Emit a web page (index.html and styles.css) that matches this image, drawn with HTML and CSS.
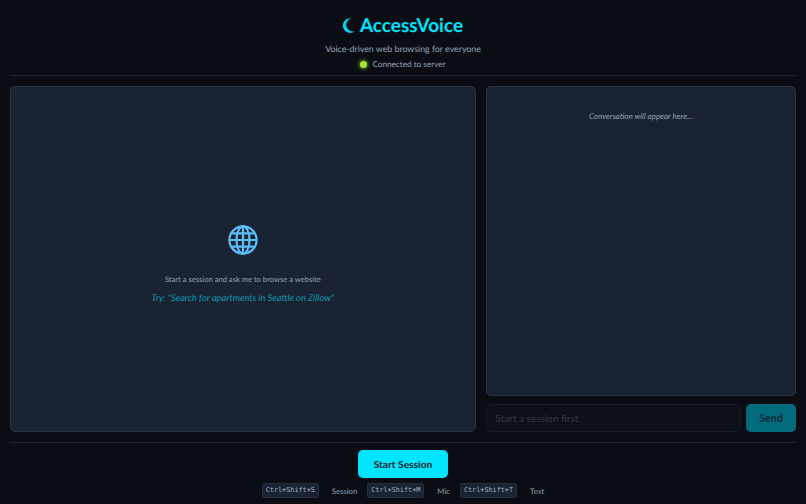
FILE: index.html
```html
<!DOCTYPE html>
<html lang="en">
<head>
    <meta charset="UTF-8">
    <meta name="viewport" content="width=device-width, initial-scale=1.0">
    <title>AccessVoice</title>
    <link rel="stylesheet" href="styles.css">
</head>
<body>
    <div class="app">
        <header class="header">
            <h1>
                <svg class="moon" width="12" height="15" viewBox="0 0 12 15">
                    <path d="M8.2 0.3A7.3 7.3 0 1 0 11.7 13.2A6 6 0 0 1 8.2 0.3Z"></path>
                </svg>
                <span>AccessVoice</span>
            </h1>
            <p class="tagline">Voice-driven web browsing for everyone</p>
            <div class="status">
                <span class="status-dot"></span>
                <span>Connected to server</span>
            </div>
        </header>

        <main class="main">
            <section class="browser-panel">
                <svg class="globe" width="30" height="30" viewBox="0 0 30 30">
                    <circle cx="15" cy="15" r="13.6" class="globe-line"></circle>
                    <ellipse cx="15" cy="15" rx="6.5" ry="13.6" class="globe-line"></ellipse>
                    <path d="M15 1.4V28.6M1.4 15H28.6M3.6 8.4H26.4M3.6 21.6H26.4" class="globe-line"></path>
                </svg>
                <p class="browser-hint">Start a session and ask me to browse a website</p>
                <p class="browser-try">Try: "Search for apartments in Seattle on Zillow"</p>
            </section>

            <section class="chat-panel">
                <div class="chat-log">
                    <p class="chat-empty">Conversation will appear here...</p>
                </div>
                <div class="chat-form">
                    <input type="text" class="chat-input" placeholder="Start a session first" disabled>
                    <button class="send-btn" disabled>Send</button>
                </div>
            </section>
        </main>

        <footer class="footer">
            <button class="start-btn">Start Session</button>
            <div class="shortcuts">
                <kbd>Ctrl+Shift+S</kbd><span>Session</span>
                <kbd>Ctrl+Shift+M</kbd><span>Mic</span>
                <kbd>Ctrl+Shift+T</kbd><span>Text</span>
            </div>
        </footer>
    </div>
</body>
</html>
```

FILE: styles.css
```css
* {
    box-sizing: border-box;
}

body {
    font-family: 'Lato', 'Open Sans', sans-serif;
    text-rendering: geometricPrecision;
    background-color: #0a0e14;
    color: #94a3b8;
    height: 100vh;
    margin: 0;
    overflow: hidden;
}

.app {
    display: flex;
    flex-direction: column;
    height: 100%;
    padding: 0 10px;
}

.header {
    height: 76px;
    padding-top: 13px;
    text-align: center;
    border-bottom: 1px solid #1a2332;
}

.header h1 {
    display: flex;
    justify-content: center;
    align-items: center;
    gap: 5px;
    margin: 0;
    font-size: 19px;
    line-height: 25px;
    font-weight: 700;
    color: #00e5ff;
}

.moon {
    fill: #00d4ee;
}

.tagline {
    margin: 4px 0 0;
    font-size: 8.8px;
    line-height: 14px;
}

.status {
    display: flex;
    justify-content: center;
    align-items: center;
    gap: 5px;
    margin-top: 1px;
    font-size: 8.2px;
    line-height: 14px;
}

.status-dot {
    width: 7px;
    height: 7px;
    border-radius: 50%;
    background-color: #a3e635;
    box-shadow: 0 0 4px #a3e635;
}

.main {
    display: grid;
    grid-template-columns: 3fr 2fr;
    gap: 10px;
    height: 346px;
    margin-top: 10px;
}

.browser-panel,
.chat-log {
    background-color: #1a2332;
    border: 1px solid #2a3544;
    border-radius: 5px;
}

.browser-panel {
    display: flex;
    flex-direction: column;
    align-items: center;
    justify-content: center;
    padding-top: 10px;
}

.globe-line {
    fill: none;
    stroke: #5cbcf5;
    stroke-width: 2.2;
}

.browser-hint {
    margin: 18px 0 0;
    font-size: 7.6px;
    line-height: 12px;
}

.browser-try {
    margin: 6px 0 0;
    font-size: 9.25px;
    line-height: 13px;
    font-style: italic;
    color: #0c9ab2;
}

.chat-panel {
    display: flex;
    flex-direction: column;
    gap: 8px;
    min-width: 0;
}

.chat-log {
    flex: 1;
    padding: 23px 10px;
}

.chat-empty {
    margin: 0;
    text-align: center;
    font-size: 8px;
    line-height: 12px;
    font-style: italic;
}

.chat-form {
    display: flex;
    gap: 5px;
    height: 28px;
}

.chat-input {
    flex: 1;
    min-width: 0;
    padding: 0 9px;
    font-family: inherit;
    font-size: 10px;
    background-color: #0d1117;
    border: 1px solid #141b26;
    border-radius: 5px;
}

.chat-input::placeholder {
    color: #2f3a48;
}

.send-btn {
    width: 50px;
    border: none;
    border-radius: 5px;
    font-family: inherit;
    font-size: 10.5px;
    font-weight: 700;
    background-color: #036c7c;
    color: #0a2a38;
}

.footer {
    display: flex;
    flex-direction: column;
    align-items: center;
    gap: 5px;
    margin-top: 10px;
    padding-top: 7px;
    border-top: 1px solid #1a2332;
}

.start-btn {
    width: 90px;
    height: 28px;
    border: none;
    border-radius: 5px;
    font-family: inherit;
    font-size: 10.2px;
    font-weight: 700;
    background-color: #00e5ff;
    color: #0a1a24;
}

.shortcuts {
    display: flex;
    align-items: center;
    gap: 10px;
    font-size: 7.7px;
}

.shortcuts span {
    margin-left: 3px;
}

kbd {
    padding: 2px 3px;
    font-family: 'DejaVu Sans Mono', monospace;
    font-size: 6.8px;
    line-height: 9px;
    color: #a3b1c4;
    background-color: #1a2332;
    border: 1px solid #232d3c;
    border-radius: 2px;
}
```
